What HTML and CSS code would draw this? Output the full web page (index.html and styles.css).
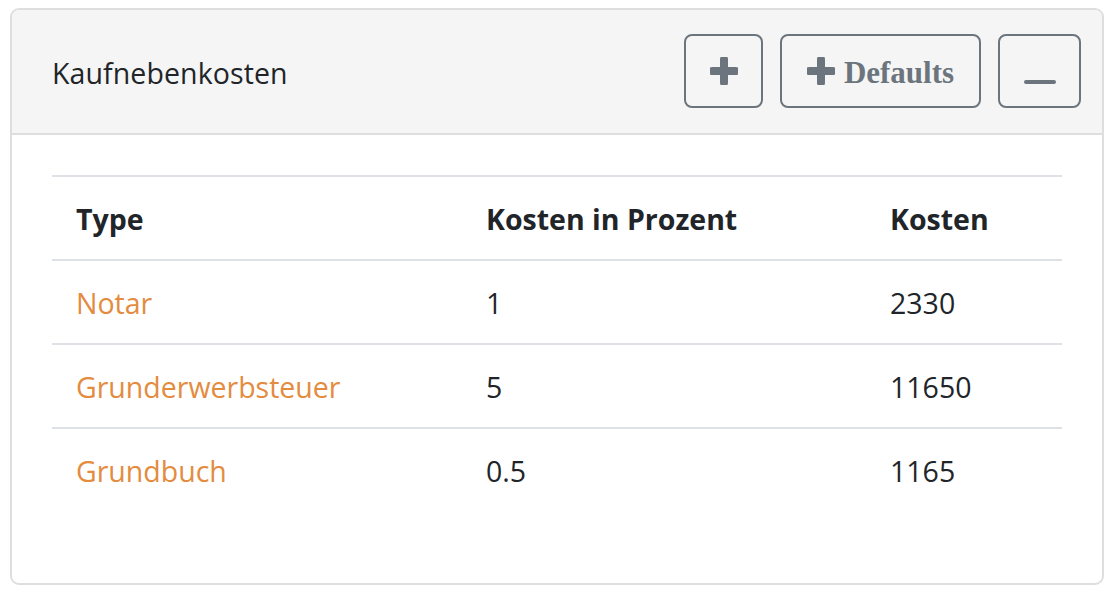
FILE: index.html
```html
<!DOCTYPE html>
<html lang="de">
<head>
<meta charset="utf-8">
<title>Kaufnebenkosten</title>
<link rel="stylesheet" href="styles.css">
</head>
<body>
<div class="card">
  <div class="card-header">
    <div class="card-title">Kaufnebenkosten</div>
    <div class="actions">
      <button class="btn btn-add" type="button" aria-label="Hinzufügen">
        <svg class="plus" viewBox="0 0 28 28" width="28" height="28"><path d="M14 2.5V25.5M2.5 14H25.5" stroke="#6c757d" stroke-width="8" stroke-linecap="round"/></svg>
      </button>
      <button class="btn btn-defaults" type="button">
        <svg class="plus" viewBox="0 0 28 28" width="28" height="28"><path d="M14 2.5V25.5M2.5 14H25.5" stroke="#6c757d" stroke-width="8" stroke-linecap="round"/></svg>
        <span class="btn-label">Defaults</span>
      </button>
      <button class="btn btn-minus" type="button" aria-label="Einklappen">
        <span class="minus"></span>
      </button>
    </div>
  </div>
  <div class="card-body">
    <table class="table">
      <thead>
        <tr><th class="col-type">Type</th><th class="col-pct">Kosten in Prozent</th><th>Kosten</th></tr>
      </thead>
      <tbody>
        <tr><td><a href="#">Notar</a></td><td>1</td><td>2330</td></tr>
        <tr><td><a href="#">Grunderwerbsteuer</a></td><td>5</td><td>11650</td></tr>
        <tr><td><a href="#">Grundbuch</a></td><td>0.5</td><td>1165</td></tr>
      </tbody>
    </table>
  </div>
</div>
</body>
</html>
```
FILE: styles.css
```css
* { box-sizing: border-box; }
html, body { margin: 0; padding: 0; background: #fff; }
body {
  font-family: "Open Sans", "DejaVu Sans", sans-serif;
  color: #212529;
  padding: 8px 10px;
}
.card {
  width: 1094px;
  height: 577px;
  border: 2px solid #dedede;
  border-radius: 9px;
  overflow: hidden;
  background: #fff;
}
.card-header {
  display: flex;
  align-items: center;
  justify-content: space-between;
  background: #f5f5f5;
  border-bottom: 2px solid #dedede;
  padding: 24px 21px 25px 40px;
}
.card-title {
  font-size: 28.5px;
  line-height: 36px;
  color: #212529;
  padding-top: 4px;
  letter-spacing: 0.1px;
}
.actions {
  display: flex;
  gap: 17px;
}
.btn {
  display: flex;
  align-items: center;
  justify-content: center;
  height: 74px;
  border: 2px solid #6c757d;
  border-radius: 8px;
  background: transparent;
  color: #6c757d;
  padding: 0;
  cursor: pointer;
}
.btn-add { width: 79px; }
.btn-defaults { width: 201px; gap: 9px; }
.btn-minus { width: 83px; }
.btn-label {
  font-family: "Liberation Serif", "Times New Roman", serif;
  font-weight: bold;
  font-size: 31px;
  line-height: 1;
  color: #6c757d;
  position: relative;
  top: 1px;
}
.minus {
  display: block;
  width: 32px;
  height: 4px;
  border-radius: 2px;
  background: #6c757d;
  margin-top: 22px;
}
.card-body {
  padding: 40px;
}
.table {
  width: 100%;
  border-collapse: collapse;
  font-size: 28.5px;
  line-height: 36px;
}
.table th, .table td {
  text-align: left;
  padding: 24px 24px 22px;
  border-top: 2px solid #dee2e6;
  vertical-align: top;
}
.table th { font-weight: bold; }
.col-type { width: 410px; }
.col-pct { width: 404px; }
.table a {
  color: #e38c40;
  text-decoration: none;
}
```
